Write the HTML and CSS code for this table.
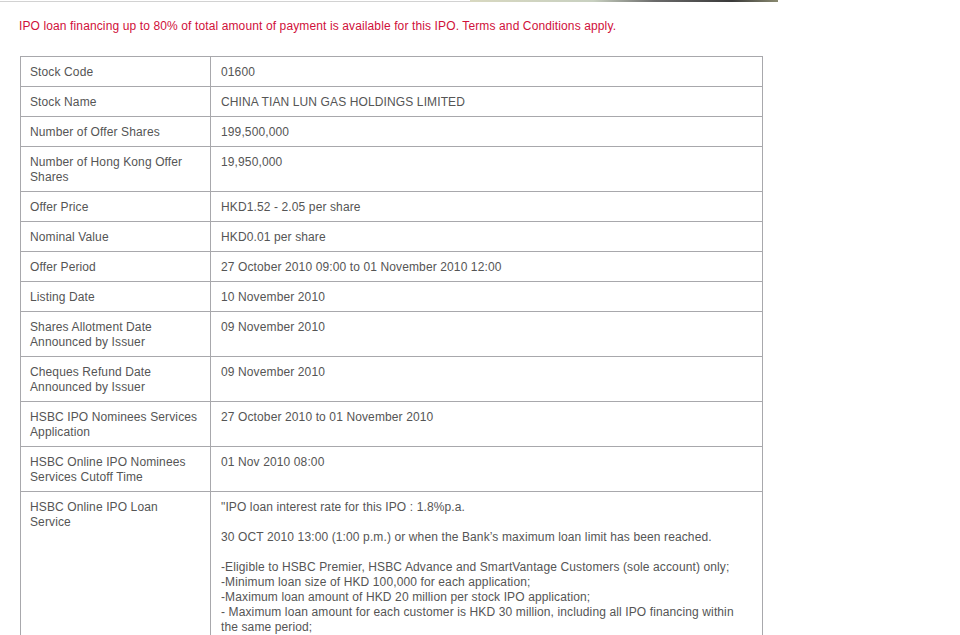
FILE: index.html
```html
<!DOCTYPE html>
<html>
<head>
<meta charset="utf-8">
<link rel="stylesheet" href="styles.css">
</head>
<body>
<div class="topbar"><div class="topbar-line"></div><div class="topbar-img"></div></div>
<div class="content">
  <p class="notice">IPO loan financing up to 80% of total amount of payment is available for this IPO. Terms and Conditions apply.</p>
  <table class="ipo">
    <tr><td class="label">Stock Code</td><td class="value">01600</td></tr>
    <tr><td class="label">Stock Name</td><td class="value">CHINA TIAN LUN GAS HOLDINGS LIMITED</td></tr>
    <tr><td class="label">Number of Offer Shares</td><td class="value">199,500,000</td></tr>
    <tr><td class="label">Number of Hong Kong Offer Shares</td><td class="value">19,950,000</td></tr>
    <tr><td class="label">Offer Price</td><td class="value">HKD1.52 - 2.05 per share</td></tr>
    <tr><td class="label">Nominal Value</td><td class="value">HKD0.01 per share</td></tr>
    <tr><td class="label">Offer Period</td><td class="value">27 October 2010 09:00 to 01 November 2010 12:00</td></tr>
    <tr><td class="label">Listing Date</td><td class="value">10 November 2010</td></tr>
    <tr><td class="label">Shares Allotment Date Announced by Issuer</td><td class="value">09 November 2010</td></tr>
    <tr><td class="label">Cheques Refund Date Announced by Issuer</td><td class="value">09 November 2010</td></tr>
    <tr><td class="label">HSBC IPO Nominees Services Application</td><td class="value">27 October 2010 to 01 November 2010</td></tr>
    <tr><td class="label">HSBC Online IPO Nominees Services Cutoff Time</td><td class="value">01 Nov 2010 08:00</td></tr>
    <tr><td class="label">HSBC Online IPO Loan Service</td><td class="value value-long">"IPO loan interest rate for this IPO : 1.8%p.a.<br><br>30 OCT 2010 13:00 (1:00 p.m.) or when the Bank’s maximum loan limit has been reached.<br><br>-Eligible to HSBC Premier, HSBC Advance and SmartVantage Customers (sole account) only;<br>-Minimum loan size of HKD 100,000 for each application;<br>-Maximum loan amount of HKD 20 million per stock IPO application;<br>- Maximum loan amount for each customer is HKD 30 million, including all IPO financing within the same period;</td></tr>
  </table>
</div>
</body>
</html>
```
FILE: styles.css
```css
html, body {
  margin: 0;
  padding: 0;
  background: #fff;
}
body {
  font-family: "Liberation Sans", Arial, sans-serif;
  font-size: 12px;
  letter-spacing: 0.12px;
  color: #555;
}
.topbar {
  display: flex;
  width: 778px;
  height: 3px;
}
.topbar-line {
  width: 470px;
  height: 2px;
  border-top: 1px solid #fff;
  box-sizing: border-box;
  background: #d2d2d2;
}
.topbar-img {
  flex: 1;
  height: 2px;
  background: linear-gradient(90deg, #d8d8c0 0%, #c8d0c0 40%, #6a6a6a 60%, #3a3a3a 85%, #8a8a70 100%);
}
.content {
  padding: 0 20px;
}
.notice {
  margin: 16px 0 22px -1px;
  line-height: 15px;
  color: #d0103a;
}
.ipo {
  width: 743px;
  border-collapse: collapse;
}
.ipo td {
  border: 1px solid #a8a8ac;
  padding: 8px 10px 6px 9px;
  line-height: 15px;
  vertical-align: top;
  text-align: left;
}
.ipo .label {
  width: 170px;
}
.ipo .value {
  padding-left: 10px;
}
.ipo .value-long {
  padding-bottom: 20px;
}
```
